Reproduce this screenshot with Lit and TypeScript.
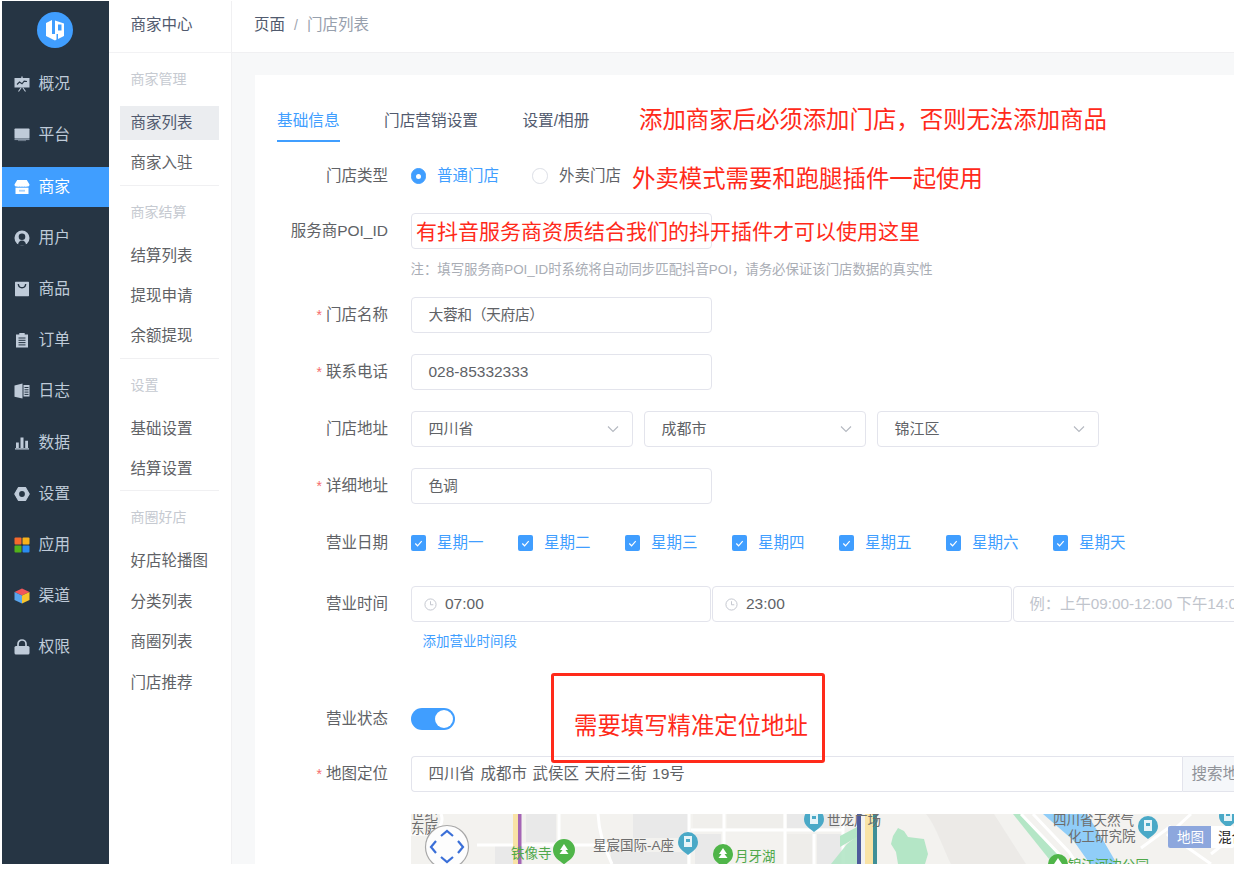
import { LitElement, html, css, svg } from "lit";
import { customElement } from "lit/decorators.js";

const icons: Record<string, any> = {
  overview: svg`<rect x="0.500" y="2" width="15" height="9.500" fill="#bfcbd9"/><rect x="7.300" y="0.500" width="1.400" height="2" fill="#bfcbd9"/><path d="M7.300 11.500L4.500 15.500M8.700 11.500l2.800 4" stroke="#bfcbd9" stroke-width="1.100"/><path d="M3 8.500l2.500-2.500 2.500 1.800 2.200-2.600L13 5.500" fill="none" stroke="#263544" stroke-width="1.200"/>`,
  platform: svg`<rect x="0.500" y="1.500" width="15" height="10" rx="0.800" fill="#bfcbd9"/><rect x="0.500" y="11.500" width="15" height="1.600" fill="#8896a6"/><rect x="4" y="13.100" width="8" height="1" fill="#6f7d8c"/>`,
  shop: svg`<path d="M3.200 1h9.600L15.500 5.500a2 2 0 0 1-2.600 2 2.600 2.600 0 0 1-2.400 0 2.600 2.600 0 0 1-2.500 0 2.600 2.600 0 0 1-2.500 0 2.600 2.600 0 0 1-2.400 0A2 2 0 0 1 .5 5.500z" fill="#fff"/><path d="M1.500 8.700h13v6.300h-13z" fill="#fff"/><rect x="5" y="10.800" width="6" height="1.800" fill="#a8d2fb"/>`,
  user: svg`<circle cx="8" cy="8" r="7.500" fill="#bfcbd9"/><circle cx="8" cy="6.800" r="3.300" fill="#263544"/><path d="M4 15.500c0-3.500 1.800-5 4-5s4 1.500 4 5z" fill="#263544"/>`,
  bag: svg`<rect x="1" y="0.800" width="14" height="14.400" rx="0.600" fill="#bfcbd9"/><path d="M4.300 3c.4 5 7 5 7.400 0" fill="none" stroke="#263544" stroke-width="1.400"/>`,
  order: svg`<path d="M2 2.500h3.300V1h5.400v1.500H14V15.500H2z" fill="#bfcbd9"/><path d="M4.500 6h7M4.500 8.300h7M4.500 10.600h7M4.500 12.900h7" stroke="#263544" stroke-width="1"/>`,
  log: svg`<path d="M.5 2.500L8.500.5v15l-8-1.800z" fill="#bfcbd9"/><rect x="9.500" y="2" width="6" height="11.500" fill="#bfcbd9"/><path d="M10.500 4.500h4M10.500 6.800h4M10.500 9.100h4M10.500 11.400h4" stroke="#263544" stroke-width="1"/>`,
  data: svg`<path d="M2 7.500h2.800v5.500H2zM6.500 2.500h3V13h-3zM11.200 5.800H14V13h-2.800zM1 13.200h14v1.300H1z" fill="#bfcbd9"/>`,
  gear: svg`<path d="M.8 8L4.400 1.700h7.200L15.200 8l-3.600 6.300H4.400z" fill="#bfcbd9" stroke="#bfcbd9" stroke-width="1.200" stroke-linejoin="round"/><circle cx="8" cy="8" r="2.900" fill="#263544"/>`,
  apps: svg`<rect x="0.500" y="0.500" width="7" height="7" rx="1" fill="#f5692c"/><rect x="8.500" y="0.500" width="7" height="7" rx="1" fill="#f7b21b"/><rect x="0.500" y="8.500" width="7" height="7" rx="1" fill="#52b21a"/><rect x="8.500" y="8.500" width="7" height="7" rx="1" fill="#2a8cf0"/>`,
  cube: svg`<path d="M8 .5l7.500 3.500L8 7.500.5 4z" fill="#f0565b"/><path d="M.5 4L8 7.500v8L.5 12z" fill="#5aa5ee"/><path d="M15.500 4L8 7.500v8l7.500-3.500z" fill="#f7c52d"/>`,
  lock: svg`<path d="M4 7V5a4 4 0 0 1 8 0v2" fill="none" stroke="#bfcbd9" stroke-width="1.700"/><rect x="0.500" y="7" width="15" height="8.500" rx="1.500" fill="#bfcbd9"/>`,
};

const nav = [
  ["overview", "概况"], ["platform", "平台"], ["shop", "商家"], ["user", "用户"],
  ["bag", "商品"], ["order", "订单"], ["log", "日志"], ["data", "数据"],
  ["gear", "设置"], ["apps", "应用"], ["cube", "渠道"], ["lock", "权限"],
];

const groups = [
  { title: "商家管理", items: ["商家列表", "商家入驻"] },
  { title: "商家结算", items: ["结算列表", "提现申请", "余额提现"] },
  { title: "设置", items: ["基础设置", "结算设置"] },
  { title: "商圈好店", items: ["好店轮播图", "分类列表", "商圈列表", "门店推荐"] },
];

const days = ["星期一", "星期二", "星期三", "星期四", "星期五", "星期六", "星期天"];

const chevron = html`<svg class="chev" viewBox="0 0 12 8" width="12" height="8"><path d="M1 1.500l5 5 5-5" fill="none" stroke="#b4b8c0" stroke-width="1.100"/></svg>`;
const clock = html`<svg class="clock" viewBox="0 0 14 14" width="13" height="13"><circle cx="7" cy="7" r="6" fill="none" stroke="#c0c4cc" stroke-width="1"/><path d="M7 3.500V7.300H10" fill="none" stroke="#c0c4cc" stroke-width="1"/></svg>`;

const pin = (x: number, y: number, r: number, color: string, kind: "tree" | "building") => svg`
  <path d="M${x - r} ${y}a${r} ${r} 0 1 1 ${2 * r} 0c0 ${r * 0.7} ${-r * 0.6} ${r * 0.95} ${-r} ${r * 1.3}c${-r * 0.4} ${-r * 0.35} ${-r} ${-r * 0.6} ${-r} ${-r * 1.3}z" fill="${color}"/>
  ${kind === "tree"
    ? svg`<path d="M${x} ${y - 6}l4 6h-2.500l3 4h-9l3-4H${x - 4}z" fill="#fff"/>`
    : svg`<rect x="${x - 4}" y="${y - 6}" width="8" height="11" fill="#e6f4f8"/><rect x="${x - 2}" y="${y - 3}" width="4" height="3" fill="${color}"/>`}
`;

const mapArt = svg`
  <rect width="823" height="50" fill="#f3f2ef"/>
  <g fill="#e9e9e9">
    <rect x="115" y="0" width="30" height="28"/>
    <rect x="84" y="31" width="28" height="19"/>
    <rect x="222" y="0" width="56" height="24"/>
    <rect x="200" y="38" width="76" height="12"/>
    <rect x="282" y="0" width="30" height="14" fill="#f0efec"/>
    <rect x="284" y="20" width="26" height="30"/>
    <rect x="316" y="0" width="56" height="14" fill="#efeeeb"/>
    <rect x="376" y="0" width="52" height="14"/>
    <rect x="376" y="20" width="26" height="30" fill="#eeedea"/>
    <rect x="406" y="20" width="26" height="30"/>
  </g>
  <path d="M0 20h30M66 31H200" stroke="#fff" stroke-width="3" fill="none"/>
  <path d="M30 0c4 10-4 18-14 22" stroke="#fff" stroke-width="3" fill="none"/>
  <path d="M148 0v28M187 0c1 18 5 30 14 50M278 0v50M313 0v50M374 0v50M403 20v30M280 16H432M432 0v50" stroke="#fff" stroke-width="3" fill="none"/>
  <rect x="102" y="0" width="5" height="50" fill="#f9e3a6"/>
  <rect x="107" y="0" width="3.500" height="50" fill="#a565b5"/>
  <path d="M429 22l17-9v10l-17 10z" fill="#b4e6c6"/>
  <path d="M420 50l16-20 10-8v28z" fill="#b4e6c6" opacity=".9"/>
  <rect x="446" y="0" width="4" height="50" fill="#4d5a9b"/>
  <rect x="454" y="0" width="8" height="50" fill="#f9e3a6"/>
  <rect x="462" y="0" width="4" height="50" fill="#3f8f97"/>
  <path d="M482 22l5-8 6 3 4 6 16 2 4 15-3 10h-27l-2-12-5-8z" fill="#b4e6c6"/>
  <path d="M515 0h68l32 50H540c-8-16-16-40-25-50z" fill="#e8e7e4" opacity=".7"/>
  <path d="M602 0h8l36 38 8 12h-12z" fill="#b4e6c6"/>
  <path d="M632 0h44l16 26 14 24h-27l-17-24z" fill="#90cdf8"/>
  <path d="M610 0l40 42 8 8M622 0l36 38 8 12M730 34l30-22M760 22l40 28M780 0l-24 22M800 40l23-18" stroke="#fff" stroke-width="3" fill="none"/>
  <text class="m-grey" x="0" y="5">世纪</text>
  <text class="m-grey" x="0" y="19">东庭</text>
  <text class="m-green" x="100" y="44">铁像寺</text>
  <text class="m-grey" x="182" y="36">星宸国际-A座</text>
  <text class="m-green" x="324" y="47">月牙湖</text>
  <text class="m-grey" x="416" y="11">世龙广场</text>
  <text class="m-grey" x="642" y="11">四川省天然气</text>
  <text class="m-grey" x="657" y="27">化工研究院</text>
  <text class="m-green" x="657" y="56">锦江河边公园</text>
  ${pin(153, 36, 11, "#4fb549", "tree")}
  ${pin(277, 28, 10, "#4aa9c7", "building")}
  ${pin(312, 40, 10, "#4fb549", "tree")}
  ${pin(403, 5, 10, "#4aa9c7", "building")}
  ${pin(737, 12, 10, "#4aa9c7", "building")}
  ${pin(817, 2, 9, "#4aa9c7", "building")}
  ${pin(647, 50, 10, "#4fb549", "tree")}
  <circle cx="36" cy="33" r="21.500" fill="#fdfdfd" stroke="#a8a8a8" stroke-width="1.200"/>
  <path d="M30 22l6-5 6 5M30 43l6 5 6-5M25 27l-5 6 5 6M47 27l5 6-5 6" fill="none" stroke="#3a6fd8" stroke-width="2.200"/>
  <rect x="757" y="12" width="66" height="22" rx="2" fill="#fff"/>
  <path d="M800 12h-41a2 2 0 0 0-2 2v18a2 2 0 0 0 2 2h41z" fill="#8da7dd"/>
  <text class="m-type" x="766" y="28" fill="#fff">地图</text>
  <text class="m-type" x="807" y="28" fill="#222">混合</text>
`;

@customElement("app-root")
export class AppRoot extends LitElement {
  static styles = css`
    :host {
      display: block;
      width: 1250px;
      height: 873px;
      background: #fff;
      overflow: hidden;
      font-family: "Liberation Sans", "Noto Sans CJK SC", sans-serif;
      font-size: 15.5px;
      line-height: 20px;
      color: #606266;
    }
    * { box-sizing: border-box; }
    .frame {
      position: relative;
      display: flex;
      width: 1232px;
      height: 863px;
      margin: 1px 0 0 2px;
      overflow: hidden;
    }
    .side {
      flex: 0 0 106.500px;
      background: #263544;
      display: flex;
      flex-direction: column;
      gap: 11.200px;
      color: #bfcbd9;
    }
    .logo { height: 52px; padding-top: 11px; display: flex; justify-content: center; }
    .nav-item {
      height: 40px;
      flex: none;
      display: flex;
      align-items: center;
      gap: 9px;
      padding-left: 11.500px;
      font-size: 15.8px;
    }
    .nav-item.on { background: #409eff; color: #fff; }
    .sub {
      flex: 0 0 123px;
      background: #fff;
      border-right: 1px solid #f0f0f2;
    }
    .sub-head {
      height: 52px;
      border-bottom: 1px solid #f2f2f4;
      padding: 0 0 3px 22px;
      display: flex;
      align-items: center;
      color: #515a6e;
    }
    .group { margin: 0 11.500px; padding: 16px 0 4.300px; border-bottom: 1px solid #f0f0f2; }
    .group:last-child { border-bottom: 0; }
    .g-title { height: 20px; line-height: 20px; color: #c6cad1; font-size: 14px; padding-left: 10.500px; margin-bottom: 17px; }
    .g-item { height: 34px; line-height: 34px; padding-left: 10.500px; margin-bottom: 6.400px; color: #606266; }
    .g-item:last-child { margin-bottom: 0; }
    .g-item.on { background: #ebedf0; color: #515a6e; }
    .main { flex: 1; min-width: 0; background: #f7f8f9; display: flex; flex-direction: column; }
    .crumb {
      flex: none;
      height: 52px;
      background: #fff;
      border-bottom: 1px solid #f0f0f2;
      padding: 0 0 3px 22.500px;
      display: flex;
      align-items: center;
      gap: 9px;
      color: #515a6e;
    }
    .crumb .sep { color: #a0a6b0; font-size: 14px; }
    .crumb .cur { color: #97a0ad; }
    .content { flex: 1; padding: 22px 0 0 23px; min-height: 0; }
    .card { background: #fff; height: 100%; padding: 36px 0 0 22.500px; overflow: hidden; }
    .tabs { display: flex; gap: 44.500px; font-size: 15.650px; }
    .tab { height: 31px; line-height: 20px; color: #515a6e; }
    .tab.on { color: #409eff; border-bottom: 2px solid #409eff; }
    .row { display: flex; align-items: center; gap: 22.500px; }
    .label { flex: 0 0 111px; text-align: right; color: #606266; white-space: nowrap; }
    .req::before { content: "*"; color: #f56c6c; margin-right: 4px; font-size: 14px; }
    .control { height: 36px; border: 1px solid #e3e4ec; border-radius: 4px; background: #fff; display: flex; align-items: center; padding-left: 17px; flex: none; white-space: nowrap; }
    .w301 { width: 301px; }
    .tight { font-size: 14.800px; letter-spacing: -0.400px; }
    .r-type { margin-top: 21px; height: 26px; }
    .r-poi { margin-top: 24px; }
    .note { margin: 11px 0 0 133.500px; height: 20px; line-height: 20px; font-size: 13.400px; color: #a9adb5; white-space: nowrap; }
    .r-name { margin-top: 17px; }
    .r-next { margin-top: 21px; }
    .r-days { margin-top: 27px; height: 24px; }
    .r-time { margin-top: 31px; }
    .r-link { margin: 10px 0 0 145.500px; height: 20px; line-height: 20px; font-size: 13.500px; color: #409eff; }
    .r-status { margin-top: 56px; height: 22px; }
    .r-map { margin-top: 26px; }
    .radios { display: flex; align-items: center; }
    .radio { width: 15.500px; height: 15.500px; border-radius: 50%; border: 1px solid #dcdfe6; flex: none; background: #fff; }
    .radio.on { background: #409eff; border-color: #409eff; display: flex; align-items: center; justify-content: center; }
    .radio.on::after { content: ""; width: 5px; height: 5px; border-radius: 50%; background: #fff; }
    .r-text { margin-left: 11px; margin-right: 33px; }
    .r-text.on { color: #409eff; }
    .r-text.last { margin-right: 0; margin-left: 11.500px; }
    .selects { display: flex; gap: 11px; }
    .sel { width: 222px; justify-content: space-between; padding-right: 13px; font-size: 15px; }
    .days { display: flex; }
    .day { width: 107px; flex: none; display: flex; align-items: center; gap: 11px; color: #409eff; }
    .cb { width: 15.500px; height: 15.500px; border-radius: 2px; background: #409eff; display: flex; align-items: center; justify-content: center; }
    .times { display: flex; gap: 0.500px; flex: none; }
    .time { width: 300.500px; padding-left: 12px; gap: 8.500px; }
    .ph { width: 260px; color: #c0c4cc; padding-left: 16px; overflow: hidden; font-size: 15.300px; }
    .switch { width: 44.500px; height: 22px; border-radius: 11px; background: #409eff; display: flex; align-items: center; justify-content: flex-end; padding-right: 2px; }
    .switch::after { content: ""; width: 18px; height: 18px; border-radius: 50%; background: #fff; }
    .search { display: flex; flex: none; }
    .search-in { width: 771px; border-radius: 4px 0 0 4px; border-right: 0; word-spacing: 1.200px; }
    .addon { width: 90px; padding-left: 9px; border-radius: 0 4px 4px 0; background: #f5f7fa; color: #909399; }
    .map { display: block; width: 823px; height: 50px; margin: 22px 0 0 133.500px; }
    .m-grey { font-size: 13.500px; fill: #6d6d6d; }
    .m-green { font-size: 13.500px; fill: #4fa84a; }
    .m-type { font-size: 13.500px; }
    .note-red { position: absolute; color: #ff2a1a; white-space: nowrap; font-size: 23.400px; line-height: 30px; }
    .n1 { left: 637px; top: 104px; }
    .n2 { left: 630px; top: 163px; }
    .n3 { left: 414px; top: 216px; font-size: 21px; }
    .n4 { left: 572px; top: 710px; }
    .box { position: absolute; left: 549px; top: 672px; width: 274px; height: 90px; border: 3px solid #ff2a1a; border-radius: 3px; }
  `;

  render() {
    return html`<div class="frame">
      <aside class="side">
        <div class="logo">
          <svg viewBox="0 0 36 36" width="36" height="36">
            <circle cx="18" cy="18" r="18" fill="#409eff"/>
            <path d="M9 11l6-3v14h4.500v5.500L18 28.500 9 24z" fill="#fff"/>
            <path fill-rule="evenodd" d="M18 8.500l9 3V24l-6 3v-5h-3zM21 12.500v6h3.500v-6z" fill="#fff"/>
          </svg>
        </div>
        ${nav.map(([ic, t], i) => html`<div class="nav-item ${i === 2 ? "on" : ""}">
          <svg viewBox="0 0 16 16" width="16" height="16">${icons[ic]}</svg><span>${t}</span>
        </div>`)}
      </aside>
      <nav class="sub">
        <div class="sub-head">商家中心</div>
        ${groups.map((g) => html`<div class="group">
          <div class="g-title">${g.title}</div>
          ${g.items.map((t) => html`<div class="g-item ${t === "商家列表" ? "on" : ""}">${t}</div>`)}
        </div>`)}
      </nav>
      <main class="main">
        <div class="crumb"><span>页面</span><span class="sep">/</span><span class="cur">门店列表</span></div>
        <div class="content"><div class="card">
          <div class="tabs">
            <div class="tab on">基础信息</div><div class="tab">门店营销设置</div><div class="tab">设置/相册</div>
          </div>
          <div class="row r-type"><div class="label">门店类型</div>
            <div class="radios">
              <span class="radio on"></span><span class="r-text on">普通门店</span>
              <span class="radio"></span><span class="r-text last">外卖门店</span>
            </div>
          </div>
          <div class="row r-poi"><div class="label">服务商POI_ID</div><div class="control w301"></div></div>
          <div class="note">注：填写服务商POI_ID时系统将自动同步匹配抖音POI，请务必保证该门店数据的真实性</div>
          <div class="row r-name"><div class="label req">门店名称</div><div class="control w301 tight">大蓉和（天府店）</div></div>
          <div class="row r-next"><div class="label req">联系电话</div><div class="control w301">028-85332333</div></div>
          <div class="row r-next"><div class="label">门店地址</div>
            <div class="selects">
              ${["四川省", "成都市", "锦江区"].map((t) => html`<div class="control sel">${t}${chevron}</div>`)}
            </div>
          </div>
          <div class="row r-next"><div class="label req">详细地址</div><div class="control w301 tight">色调</div></div>
          <div class="row r-days"><div class="label">营业日期</div>
            <div class="days">
              ${days.map((d) => html`<div class="day"><span class="cb"><svg viewBox="0 0 12 12" width="11" height="11"><path d="M2.500 6l2.500 2.500 4.500-5" fill="none" stroke="#fff" stroke-width="1.300"/></svg></span>${d}</div>`)}
            </div>
          </div>
          <div class="row r-time"><div class="label">营业时间</div>
            <div class="times">
              <div class="control time">${clock}07:00</div>
              <div class="control time">${clock}23:00</div>
              <div class="control ph">例：上午09:00-12:00 下午14:00-18:00</div>
            </div>
          </div>
          <div class="r-link">添加营业时间段</div>
          <div class="row r-status"><div class="label">营业状态</div><div class="switch"></div></div>
          <div class="row r-map"><div class="label req">地图定位</div>
            <div class="search">
              <div class="control search-in">四川省 成都市 武侯区 天府三街 19号</div>
              <div class="control addon">搜索地址</div>
            </div>
          </div>
          <svg class="map" viewBox="0 0 823 50">${mapArt}</svg>
        </div></div>
      </main>
      <div class="note-red n1">添加商家后必须添加门店，否则无法添加商品</div>
      <div class="note-red n2">外卖模式需要和跑腿插件一起使用</div>
      <div class="note-red n3">有抖音服务商资质结合我们的抖开插件才可以使用这里</div>
      <div class="box"></div>
      <div class="note-red n4">需要填写精准定位地址</div>
    </div>`;
  }
}
